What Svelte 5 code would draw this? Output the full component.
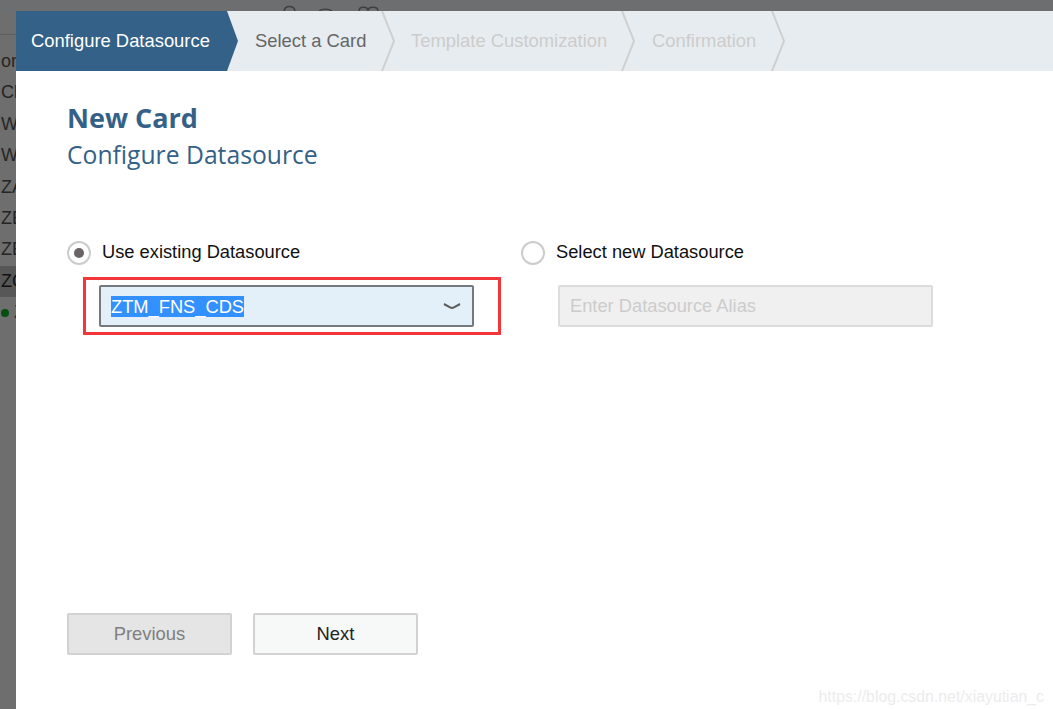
<script>
  const rows = [
    { t: 'or' }, { t: 'Cl' }, { t: 'W' }, { t: 'W' },
    { t: 'ZA' }, { t: 'ZE' }, { t: 'ZE' }, { t: 'ZC', active: true }
  ];
  const steps = [
    { label: 'Configure Datasource', cls: 'current' },
    { label: 'Select a Card', cls: 'second' },
    { label: 'Template Customization', cls: 'third' },
    { label: 'Confirmation', cls: 'fourth' }
  ];
</script>

<div class="page">
  <div class="topbar">
    <svg class="peek" width="100" height="11" viewBox="0 0 100 11" aria-hidden="true">
      <path d="M1 11 C2 5 11 5 12 11" />
      <path d="M36 11 C39 8.5 46 8.5 49 11" />
      <path d="M76 11 C76 6 85 6 85 11 M85 11 C85 6 95 6 95 11" />
    </svg>
  </div>
  <div class="main">
    <aside class="strip">
      <div class="strip-line"></div>
      {#each rows as r}
        <div class="row" class:active={r.active}>{r.t}</div>
      {/each}
      <div class="row status"><span class="dot"></span><span class="tick">Z</span></div>
    </aside>

    <section class="dialog">
      <nav class="wizard">
        {#each steps as s}
          <div class="step {s.cls}">
            <span>{s.label}</span>
            {#if s.cls !== 'current'}
              <svg class="chev" width="15" height="60" viewBox="0 0 15 60" aria-hidden="true">
                <path d="M1 0 L13 30 L1 60" />
              </svg>
            {/if}
          </div>
        {/each}
      </nav>

      <div class="body">
        <h1>New Card</h1>
        <h2>Configure Datasource</h2>

        <div class="form">
          <div class="col">
            <label class="radio-row">
              <span class="radio on"></span>
              <span class="radio-label">Use existing Datasource</span>
            </label>
            <div class="highlight">
              <div class="select">
                <span class="sel-text">ZTM_FNS_CDS</span>
                <span class="arrow">
                  <svg width="18" height="8" viewBox="0 0 18 8" aria-hidden="true">
                    <path d="M1 2 C5 4 7 6 9 6 C11 6 13 4 17 2" />
                  </svg>
                </span>
              </div>
            </div>
          </div>
          <div class="col">
            <label class="radio-row">
              <span class="radio"></span>
              <span class="radio-label">Select new Datasource</span>
            </label>
            <div class="alias-wrap">
              <input class="alias" placeholder="Enter Datasource Alias" disabled />
            </div>
          </div>
        </div>

        <div class="footer">
          <button class="btn prev" disabled>Previous</button>
          <button class="btn next">Next</button>
        </div>
      </div>

      <div class="watermark">https://blog.csdn.net/xiayutian_c</div>
    </section>
  </div>
</div>

<style>
  :global(body) { margin: 0; background: #6d6e70; }
  .page {
    width: 1053px;
    height: 709px;
    display: flex;
    flex-direction: column;
    overflow: hidden;
    font-family: "Liberation Sans", Arial, sans-serif;
    background: #6d6e70;
  }
  .topbar { height: 11px; flex: none; padding-left: 283px; box-sizing: border-box; overflow: hidden; }
  .peek { display: block; }
  .peek path { fill: none; stroke: #3f3f3f; stroke-width: 1.4; }
  .main { flex: 1; display: flex; min-height: 0; }

  .strip { width: 16px; flex: none; overflow: hidden; background: #6e6e6e; color: #252525; font-size: 18px; }
  .strip-line { height: 1px; background: #5f5f5f; margin: 23px 0 11px; }
  .row { height: 31.4px; line-height: 31.4px; padding-left: 1px; white-space: nowrap; display: flex; align-items: center; }
  .row.active { background: #575757; color: #111; }
  .status { gap: 5px; }
  .dot { width: 8px; height: 8px; border-radius: 50%; background: #064f10; flex: none; }
  .tick { font-size: 18px; color: #333; }

  .dialog { flex: 1; position: relative; display: flex; flex-direction: column; background: #fff; min-width: 0; }

  .wizard { height: 60px; flex: none; display: flex; background: #e7ecf0; font-size: 18.4px; }
  .step { height: 60px; display: flex; align-items: center; box-sizing: border-box; white-space: nowrap; color: #ccc; }
  .step .chev { margin-left: auto; flex: none; }
  .chev path { fill: none; stroke: #cfcfcf; stroke-width: 2; }
  .current {
    width: 224px;
    padding-left: 15px;
    color: #fff;
    background: #346187;
    clip-path: polygon(0 0, 211px 0, 222px 30px, 211px 60px, 0 60px);
  }
  .second { width: 156px; padding-left: 15px; color: #666; }
  .third { width: 240px; padding-left: 15px; }
  .fourth { width: 150px; padding-left: 16px; }

  .body { flex: 1; display: flex; flex-direction: column; padding: 28px 0 54px 51px; min-height: 0; }
  h1 {
    margin: 0 0 1px;
    font: 700 27px/37px "Open Sans", "Noto Sans", sans-serif;
    color: #346187;
  }
  h2 {
    margin: 0;
    font: 400 24.7px/36px "Open Sans", "Noto Sans", sans-serif;
    color: #346187;
  }
  .form { display: flex; margin-top: 68px; font-size: 18.3px; color: #111; }
  .col { width: 454px; flex: none; }
  .radio-row { display: flex; align-items: center; gap: 11px; height: 24px; }
  .radio-label { padding-bottom: 2px; }
  .radio {
    width: 24px;
    height: 24px;
    box-sizing: border-box;
    border: 2px solid #ccc;
    border-radius: 50%;
    display: flex;
    align-items: center;
    justify-content: center;
    background: #fff;
  }
  .radio.on::after { content: ""; width: 10px; height: 10px; border-radius: 50%; background: #6a6464; }

  .highlight {
    width: 418px;
    height: 58px;
    margin: 12px 0 0 16px;
    box-sizing: border-box;
    border: 3px solid #f3363a;
    padding: 5px 0 0 13px;
  }
  .select {
    width: 375px;
    height: 42px;
    box-sizing: border-box;
    border: 2px solid #75797d;
    border-radius: 2px;
    background: #e3f0f9;
    display: flex;
    align-items: center;
    justify-content: space-between;
    padding: 0 0 0 10px;
  }
  .sel-text { background: #3390ff; color: #fff; line-height: 21px; }
  .arrow {
    align-self: stretch;
    width: 39px;
    margin-top: -1px;
    box-sizing: border-box;
    border-top: 1px solid #75797d;
    background: #e3f0f9;
    display: flex;
    align-items: center;
    padding-left: 10px;
  }
  .arrow svg { display: block; }
  .arrow path { fill: none; stroke: #5d5d5d; stroke-width: 2; }

  .alias-wrap { padding: 20px 0 0 37px; }
  .alias {
    display: block;
    width: 375px;
    height: 42px;
    box-sizing: border-box;
    border: 2px solid #dcdcdc;
    border-radius: 2px;
    background: #f0f0f0;
    padding: 0 10px;
    font: 18.3px "Liberation Sans", Arial, sans-serif;
  }
  .alias::placeholder { color: #ccc; opacity: 1; }

  .footer { margin-top: auto; display: flex; gap: 21px; }
  .btn {
    width: 165px;
    height: 42px;
    box-sizing: border-box;
    border: 2px solid #d2d2d2;
    border-radius: 2px;
    font: 18.4px "Liberation Sans", Arial, sans-serif;
    padding: 0;
  }
  .prev { background: #e5e5e5; color: #7f7f7f; }
  .next { background: #f7f9f9; color: #222; }

  .watermark {
    position: absolute;
    right: 9px;
    bottom: 3px;
    font-size: 15.85px;
    color: #ececec;
    white-space: nowrap;
  }
</style>
